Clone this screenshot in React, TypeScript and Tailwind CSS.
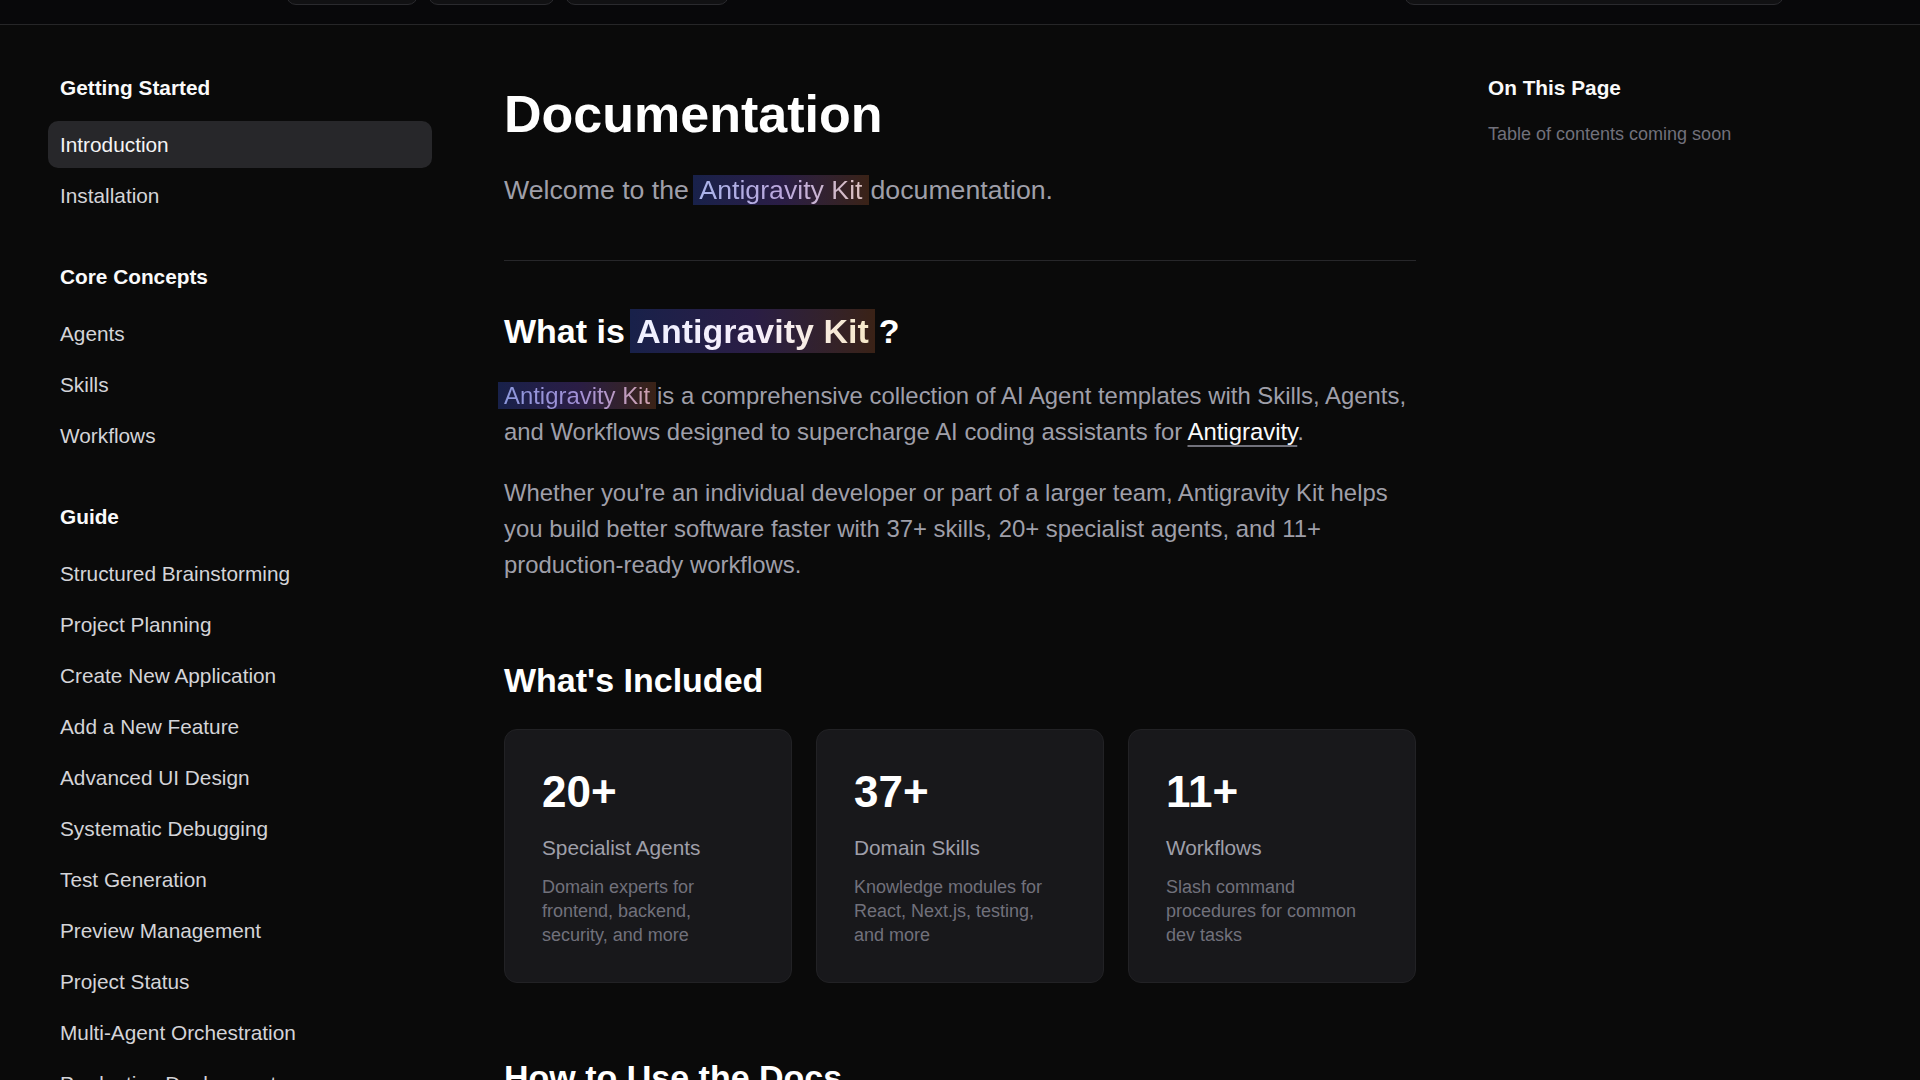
import type React from "react"

const navSections = [
  { title: "Getting Started", items: ["Introduction", "Installation"] },
  { title: "Core Concepts", items: ["Agents", "Skills", "Workflows"] },
  {
    title: "Guide",
    items: [
      "Structured Brainstorming",
      "Project Planning",
      "Create New Application",
      "Add a New Feature",
      "Advanced UI Design",
      "Systematic Debugging",
      "Test Generation",
      "Preview Management",
      "Project Status",
      "Multi-Agent Orchestration",
      "Production Deployment",
    ],
  },
]

const stats = [
  { value: "20+", label: "Specialist Agents", text: "Domain experts for frontend, backend, security, and more" },
  { value: "37+", label: "Domain Skills", text: "Knowledge modules for React, Next.js, testing, and more" },
  { value: "11+", label: "Workflows", text: "Slash command procedures for common dev tasks" },
]

// brand name with the soft gradient marker behind it
function BrandMark({ children, box, ink }: { children: React.ReactNode; box: string; ink: string }) {
  return (
    <span className={`bg-linear-to-r from-[#18214a] via-[#2a1d45] to-[#3a2216] ${box}`}>
      <span className={`bg-linear-to-r bg-clip-text text-transparent ${ink}`}>{children}</span>
    </span>
  )
}

function TopBar() {
  return (
    <header className="h-[25px] overflow-hidden border-b border-[#262628] bg-[#08080a]">
      <div className="-mt-[35px] flex h-[40px] items-stretch px-12">
        <div className="w-[238px]" />
        <div className="flex gap-[10px]">
          <div className="w-[132px] rounded-[10px] border border-[#2a2a2e] bg-[#111113]" />
          <div className="w-[127px] rounded-[10px] border border-[#2a2a2e] bg-[#111113]" />
          <div className="w-[164px] rounded-[10px] border border-[#2a2a2e] bg-[#111113]" />
        </div>
        <div className="mr-[88px] ml-auto w-[380px] rounded-[10px] border border-[#2a2a2e] bg-[#111113]" />
      </div>
    </header>
  )
}

function Sidebar() {
  return (
    <aside className="w-[384px] shrink-0">
      {navSections.map((section, i) => (
        <div key={section.title} className={i === 0 ? "" : "mt-[45px]"}>
          <h3 className="mb-[20px] px-[12px] text-[20.8px] font-bold leading-[26px] text-zinc-50">{section.title}</h3>
          <ul className="flex flex-col gap-[4px]">
            {section.items.map((item) => (
              <li
                key={item}
                className={`flex h-[47px] items-center rounded-[10px] px-[12px] text-[20.8px] leading-[26px] ${
                  item === "Introduction" ? "bg-[#27272a] text-zinc-100" : "text-zinc-300"
                }`}
              >
                {item}
              </li>
            ))}
          </ul>
        </div>
      ))}
    </aside>
  )
}

function StatCard({ value, label, text }: { value: string; label: string; text: string }) {
  return (
    <div className="rounded-[13px] border border-[#222225] bg-[#18181b] px-[37px] pt-[38px] pb-[35px]">
      <div className="text-[44px] font-bold leading-[48px] text-white">{value}</div>
      <div className="mt-[18px] text-[20.8px] leading-[28px] text-zinc-400">{label}</div>
      <p className="mt-[13px] text-[18px] leading-[24px] text-zinc-500">{text}</p>
    </div>
  )
}

function Content() {
  return (
    <main className="w-[912px] shrink-0">
      <div className="border-b border-[#27272a] pb-[52px]">
        <h1 className="mt-[11px] text-[52px] font-bold leading-[56px] text-white">Documentation</h1>
        <p className="mt-[30px] text-[26.7px] leading-[36px] text-zinc-400">
          Welcome to the{" "}
          <BrandMark box="-ml-[3px] mr-[2px] px-[6px]" ink="from-[#a9b3ea] via-[#bba8de] to-[#dcc2c2]">
            Antigravity Kit
          </BrandMark>
          documentation.
        </p>
      </div>

      <h2 className="mt-[50px] text-[34px] font-bold leading-[40px] text-white">
        What is{" "}
        <BrandMark box="-ml-[4px] px-[6px] py-[3px]" ink="from-[#eef0ff] via-[#f6eefc] to-[#f7e8c8]">
          Antigravity Kit
        </BrandMark>
        <span className="ml-[4px]">?</span>
      </h2>

      <p className="mt-[27px] text-[23.9px] leading-[36px] text-zinc-400">
        <BrandMark box="-ml-[6px] mr-[1px] px-[6px]" ink="from-[#8c98dc] via-[#a18fd6] to-[#cfa1b0]">
          Antigravity Kit
        </BrandMark>
        is a comprehensive collection of AI Agent templates with Skills, Agents, and Workflows designed to
        supercharge AI coding assistants for{" "}
        <a className="text-zinc-50 underline decoration-zinc-500 underline-offset-[5px]">Antigravity</a>.
      </p>
      <p className="mt-[25px] text-[23.9px] leading-[36px] text-zinc-400">
        Whether you're an individual developer or part of a larger team, Antigravity Kit helps you build better
        software faster with 37+ skills, 20+ specialist agents, and 11+ production-ready workflows.
      </p>

      <h2 className="mt-[77px] text-[34px] font-bold leading-[40px] text-white">What's Included</h2>
      <div className="mt-[29px] grid grid-cols-3 gap-[24px]">
        {stats.map((s) => (
          <StatCard key={s.value} {...s} />
        ))}
      </div>

      <h2 className="mt-[74px] text-[34px] font-bold leading-[40px] text-white">How to Use the Docs</h2>
    </main>
  )
}

function PageOutline() {
  return (
    <aside className="w-[384px] shrink-0">
      <h3 className="text-[20.8px] font-bold leading-[26px] text-zinc-50">On This Page</h3>
      <p className="mt-[20px] text-[18px] leading-[26px] text-zinc-500">Table of contents coming soon</p>
    </aside>
  )
}

export default function App() {
  return (
    <div className="h-[1080px] overflow-hidden bg-[#0a0a0a] font-['Liberation_Sans',Arial,sans-serif]">
      <TopBar />
      <div className="flex gap-[72px] px-12 pt-[50px]">
        <Sidebar />
        <Content />
        <PageOutline />
      </div>
    </div>
  )
}
